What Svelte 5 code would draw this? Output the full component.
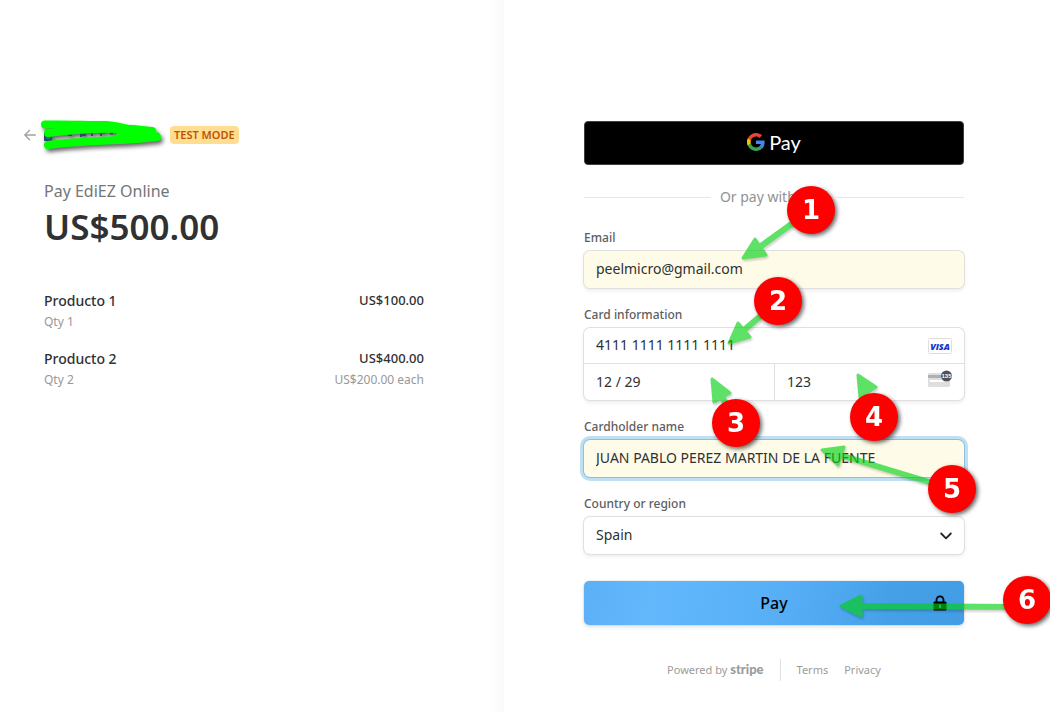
<script>
  const items = [
    { name: 'Producto 1', qty: 1, total: 'US$100.00', each: '' },
    { name: 'Producto 2', qty: 2, total: 'US$400.00', each: 'US$200.00 each' }
  ];

  let email = $state('peelmicro@gmail.com');
  let number = $state('4111 1111 1111 1111');
  let expiry = $state('12 / 29');
  let cvc = $state('123');
  let holder = $state('JUAN PABLO PEREZ MARTIN DE LA FUENTE');
  let country = $state('Spain');

  // Numbered callouts, in coordinates of the checkout form
  const steps = [
    { n: 1, x: 227, y: 89, sx: 177, sy: 125, head: '159,137 171,118 182,134' },
    { n: 2, x: 194, y: 180, sx: 160, sy: 209, head: '145,222 154,202 166,216' },
    { n: 3, x: 152, y: 302, sx: 137, sy: 274, head: '128,258 146,272 130,281' },
    { n: 4, x: 290, y: 296, sx: 282, sy: 275, head: '274,254 292,266 276,276' },
    { n: 5, x: 368, y: 368, sx: 256, sy: 334, head: '238,329 260,326 254,344' },
    { n: 6, x: 443, y: 479, sx: 278, sy: 485, head: '257,485 277,475 277,495' }
  ];
</script>

<main class="page">
  <section class="summary">
    <div class="column">
      <header class="merchant">
        <a class="back" href="#back" aria-label="Back">
          <svg width="12" height="12" viewBox="0 0 12 12" fill="none" stroke="#a3a3a3" stroke-width="1.4" stroke-linecap="round" stroke-linejoin="round">
            <path d="M11.3 6H.9M5.6 1.2.8 6l4.8 4.8" />
          </svg>
        </a>
        <svg class="scribble" width="118" height="30" viewBox="0 0 118 30" aria-hidden="true">
          <path d="M1 14h6v6H1zM24 15h4M37 12v5M38 12.500h5M38 15h4M48 12v4M55 12.500h6M57 12v4M66 13.500h3" stroke="#2c4a66" stroke-width="2" fill="#1a6a9a" />
          <path d="M112 13v6h3v-4z" fill="#1a5a9a" />
          <g fill="none" stroke="#00ff00" stroke-width="8" stroke-linecap="round" stroke-linejoin="round">
            <path d="M1 4.500C20 4 42 5 62 5C76 6 86 10 94 11" />
            <path d="M4 13C24 10.500 40 9 56 9C74 8 92 9 108 11" />
            <path d="M4 25C28 22 54 21 78 20C94 19 104 18 113 17" />
            <path d="M52 8C70 7 88 12 106 14" />
            <path d="M76 16C90 16 102 15 112 16" />
          </g>
        </svg>
        <span class="badge">TEST MODE</span>
      </header>
      <h1>
        <span class="title">Pay EdiEZ Online</span>
        <span class="amount">US$500.00</span>
      </h1>
      <ul class="items">
        {#each items as item}
          <li>
            <div class="line"><span>{item.name}</span><span class="total">{item.total}</span></div>
            <div class="note"><span>Qty {item.qty}</span><span>{item.each}</span></div>
          </li>
        {/each}
      </ul>
    </div>
  </section>

  <section class="payment">
    <form class="column" onsubmit={(e) => e.preventDefault()}>
      <button class="gpay" type="button" aria-label="Google Pay">
        <svg width="18" height="18" viewBox="0 0 48 48">
          <path fill="#EA4335" d="M24 9.5c3.5 0 6.700 1.200 9.200 3.600l6.900-6.900C35.900 2.400 30.500 0 24 0 14.600 0 6.500 5.400 2.600 13.200l8 6.200C12.400 13.700 17.700 9.500 24 9.500z" />
          <path fill="#4285F4" d="M47 24.500c0-1.600-.2-3.100-.4-4.500H24v9h12.900c-.6 3-2.300 5.500-4.800 7.200l7.700 6C44.400 38 47 31.800 47 24.500z" />
          <path fill="#FBBC05" d="M10.500 28.600a14.500 14.500 0 0 1 0-9.200l-8-6.200a24 24 0 0 0 0 21.600l8-6.200z" />
          <path fill="#34A853" d="M24 48c6.500 0 11.900-2.100 15.900-5.800l-7.700-6c-2.200 1.500-4.900 2.300-8.200 2.300-6.300 0-11.600-4.200-13.500-9.900l-8 6.200C6.500 42.600 14.600 48 24 48z" />
        </svg>
        <span>Pay</span>
      </button>

      <div class="divider"><span>Or pay with card</span></div>

      <div class="field">
        <label for="email">Email</label>
        <input id="email" class="box filled" type="email" bind:value={email} />
      </div>

      <div class="field">
        <label for="number">Card information</label>
        <div class="card">
          <div class="row number">
            <input id="number" bind:value={number} />
            <svg width="24" height="16" viewBox="0 0 24 16" role="img" aria-label="Visa">
              <rect x=".5" y=".5" width="23" height="15" rx="1" fill="#fff" stroke="#dedede" />
              <text class="visa" x="12" y="11.500" text-anchor="middle">VISA</text>
            </svg>
          </div>
          <div class="row">
            <input aria-label="Expiration" bind:value={expiry} />
          </div>
          <div class="row cvc">
            <input aria-label="CVC" bind:value={cvc} />
            <svg width="24" height="24" viewBox="0 0 24 24" aria-hidden="true">
              <rect y="3" width="22" height="14" rx="1.500" fill="#dedede" />
              <path d="M0 5h22v3H0z" fill="#b0b0b0" />
              <path d="M2 10h18v2H2z" fill="#fff" />
              <circle cx="18.500" cy="6" r="5.500" fill="#505355" />
              <text class="digits" x="18.500" y="8.200" text-anchor="middle">135</text>
            </svg>
          </div>
        </div>
      </div>

      <div class="field">
        <label for="holder">Cardholder name</label>
        <input id="holder" class="box filled active" bind:value={holder} />
      </div>

      <div class="field">
        <label for="country">Country or region</label>
        <div class="choice">
          <select id="country" class="box" bind:value={country}>
            <option>Spain</option>
          </select>
          <svg width="12" height="8" viewBox="0 0 12 8" fill="none" stroke="#222" stroke-width="1.800" stroke-linecap="round" stroke-linejoin="round">
            <path d="M1.200 1.500 6 6.300l4.800-4.800" />
          </svg>
        </div>
      </div>

      <button class="pay" type="submit">
        <span>Pay</span>
        <svg width="14" height="16" viewBox="0 0 14 16">
          <path d="M3.500 7V4.800a3.500 3.500 0 0 1 7 0V7" fill="none" stroke="#000" stroke-width="1.800" />
          <path fill="#000" fill-rule="evenodd" d="M1.500 6.500h11a1 1 0 0 1 1 1v7a1 1 0 0 1-1 1h-11a1 1 0 0 1-1-1v-7a1 1 0 0 1 1-1zM6 9.500v3.500h2V9.500z" />
        </svg>
      </button>

      <footer>
        <span class="powered">Powered by <b>stripe</b></span>
        <a class="terms" href="#terms">Terms</a>
        <a href="#privacy">Privacy</a>
      </footer>

      <svg class="callouts" aria-hidden="true">
        {#each steps as s}
          <g class="arrow">
            <line x1={s.x} y1={s.n === 6 ? 486 : s.y} x2={s.sx} y2={s.sy} />
            <polygon points={s.head} />
          </g>
          <g class="dot">
            <circle cx={s.x} cy={s.y} r="24" />
            <text x={s.x} y={s.y + 9} text-anchor="middle">{s.n}</text>
          </g>
        {/each}
      </svg>
    </form>
  </section>
</main>

<style>
  :global(body) {
    margin: 0;
    background: #fff;
  }
  .page {
    display: grid;
    grid-template-columns: 48fr 52fr;
    min-height: 100vh;
    overflow: hidden;
    box-sizing: border-box;
    color: #303132;
    font-family: 'Noto Sans', sans-serif;
    font-size: 14px;
  }
  .page * {
    box-sizing: border-box;
  }
  .summary,
  .payment {
    display: flex;
    padding: 121px 80px 30px;
  }
  .summary {
    justify-content: flex-end;
    padding-left: 24px;
    background: linear-gradient(to left, #fafafa, #fff 16px);
  }
  .column {
    width: 100%;
    max-width: 380px;
  }
  .merchant {
    display: flex;
    align-items: center;
    height: 28px;
    margin-left: -20px;
  }
  .back {
    display: flex;
    width: 20px;
  }
  .scribble {
    overflow: visible;
    filter: drop-shadow(2px 3px 2px rgba(0, 0, 0, 0.6));
  }
  .badge {
    margin-left: 8px;
    padding: 0 4px;
    border-radius: 4px;
    background: #ffde92;
    color: #bb5504;
    font-size: 11px;
    font-weight: 600;
    line-height: 18px;
  }
  h1 {
    display: flex;
    flex-direction: column;
    margin: 30px 0 0;
  }
  .title {
    color: #747576;
    font-size: 16px;
    font-weight: 400;
    line-height: 24px;
  }
  .amount {
    font-size: 35px;
    font-weight: 600;
    line-height: 48px;
  }
  .items {
    display: flex;
    flex-direction: column;
    gap: 16px;
    margin: 39px 0 0;
    padding: 0;
    list-style: none;
  }
  .line,
  .note {
    display: flex;
    justify-content: space-between;
  }
  .line {
    font-weight: 500;
    line-height: 21px;
  }
  .total {
    font-size: 13px;
  }
  .note {
    color: #989898;
    font-size: 12px;
    line-height: 21px;
  }
  form {
    position: relative;
  }
  button {
    font-family: inherit;
    cursor: pointer;
  }
  .gpay {
    display: flex;
    align-items: center;
    justify-content: center;
    gap: 4px;
    width: 100%;
    height: 44px;
    padding: 0 0 2px;
    border: 1px solid #3c4043;
    border-radius: 4px;
    background: #000;
    color: #fff;
    font-family: Lato, sans-serif;
    font-size: 20px;
  }
  .divider {
    display: flex;
    align-items: center;
    gap: 9px;
    margin: 22px 0;
    color: #929292;
    line-height: 20px;
  }
  .divider::before,
  .divider::after {
    content: '';
    flex: 1;
    height: 1px;
    background: #e6e6e6;
  }
  .field {
    display: flex;
    flex-direction: column;
    gap: 4px;
    margin-bottom: 18px;
  }
  label {
    color: #5d5e5f;
    font-size: 12px;
    font-weight: 500;
    line-height: 18px;
  }
  input,
  select {
    width: 100%;
    min-width: 0;
    padding: 0 12px 2px;
    border: 0;
    outline: 0;
    background: transparent;
    color: #303132;
    font: inherit;
    appearance: none;
  }
  .box,
  .card {
    border-radius: 6px;
    background: #fff;
    box-shadow: 0 0 0 1px #e0e0e0, 0 2px 4px rgba(0, 0, 0, 0.1);
  }
  .box {
    height: 37px;
  }
  .filled {
    background: #fefbe8;
  }
  .active {
    box-shadow: 0 0 0 1px #8ebfe0, 0 0 0 4px #bfdff2;
  }
  .card {
    display: grid;
    grid-template-columns: 1fr 1fr;
  }
  .row {
    display: flex;
    align-items: center;
    height: 36px;
    padding-right: 12px;
  }
  .row input {
    flex: 1;
    height: 36px;
  }
  .row svg {
    flex: none;
  }
  .number {
    grid-column: 1 / -1;
    border-bottom: 1px solid #e0e0e0;
  }
  .cvc {
    border-left: 1px solid #e0e0e0;
  }
  .visa {
    fill: #1434cb;
    font: italic 800 9px 'Open Sans', sans-serif;
  }
  .digits {
    fill: #fff;
    font: 700 6px 'Liberation Sans', sans-serif;
  }
  .choice {
    display: grid;
    align-items: center;
  }
  .choice > * {
    grid-area: 1 / 1;
  }
  .choice svg {
    justify-self: end;
    margin-right: 12px;
    pointer-events: none;
  }
  .pay {
    display: grid;
    align-items: center;
    width: 100%;
    height: 44px;
    margin-top: 27px;
    padding: 0 17px;
    border: 0;
    border-radius: 5px;
    background: linear-gradient(100deg, #5cb0f6, #63b8fc 18%, #55aef5 55%, #46a0e8 80%, #439de5);
    box-shadow: 0 0 0 1px rgba(50, 50, 93, 0.06), 0 2px 4px rgba(0, 0, 0, 0.12);
    color: #000;
    font-size: 16px;
    font-weight: 500;
  }
  .pay > * {
    grid-area: 1 / 1;
    justify-self: center;
  }
  .pay svg {
    justify-self: end;
  }
  footer {
    display: flex;
    align-items: center;
    justify-content: center;
    gap: 16px;
    margin-top: 33px;
    color: #9b9b9b;
    font-size: 11px;
    line-height: 22px;
  }
  footer a {
    color: inherit;
    text-decoration: none;
  }
  footer b {
    font-family: Lato, sans-serif;
    font-size: 13px;
    font-weight: 900;
  }
  .terms {
    padding-left: 16px;
    border-left: 1px solid #e0e0e0;
  }
  .callouts {
    position: absolute;
    top: 0;
    left: 0;
    width: 100%;
    height: 100%;
    overflow: visible;
    pointer-events: none;
  }
  .arrow {
    opacity: 0.63;
    filter: drop-shadow(1px 2px 1px rgba(0, 0, 0, 0.3));
  }
  .arrow line {
    stroke: #00d010;
    stroke-width: 6;
  }
  .arrow polygon {
    fill: #00d010;
    stroke: #00d010;
    stroke-width: 3;
    stroke-linejoin: round;
  }
  .dot {
    filter: drop-shadow(2px 2px 2px rgba(0, 0, 0, 0.6));
  }
  .dot circle {
    fill: #fe0000;
  }
  .dot text {
    fill: #fff;
    font: 700 26px 'DejaVu Sans', sans-serif;
  }
</style>
